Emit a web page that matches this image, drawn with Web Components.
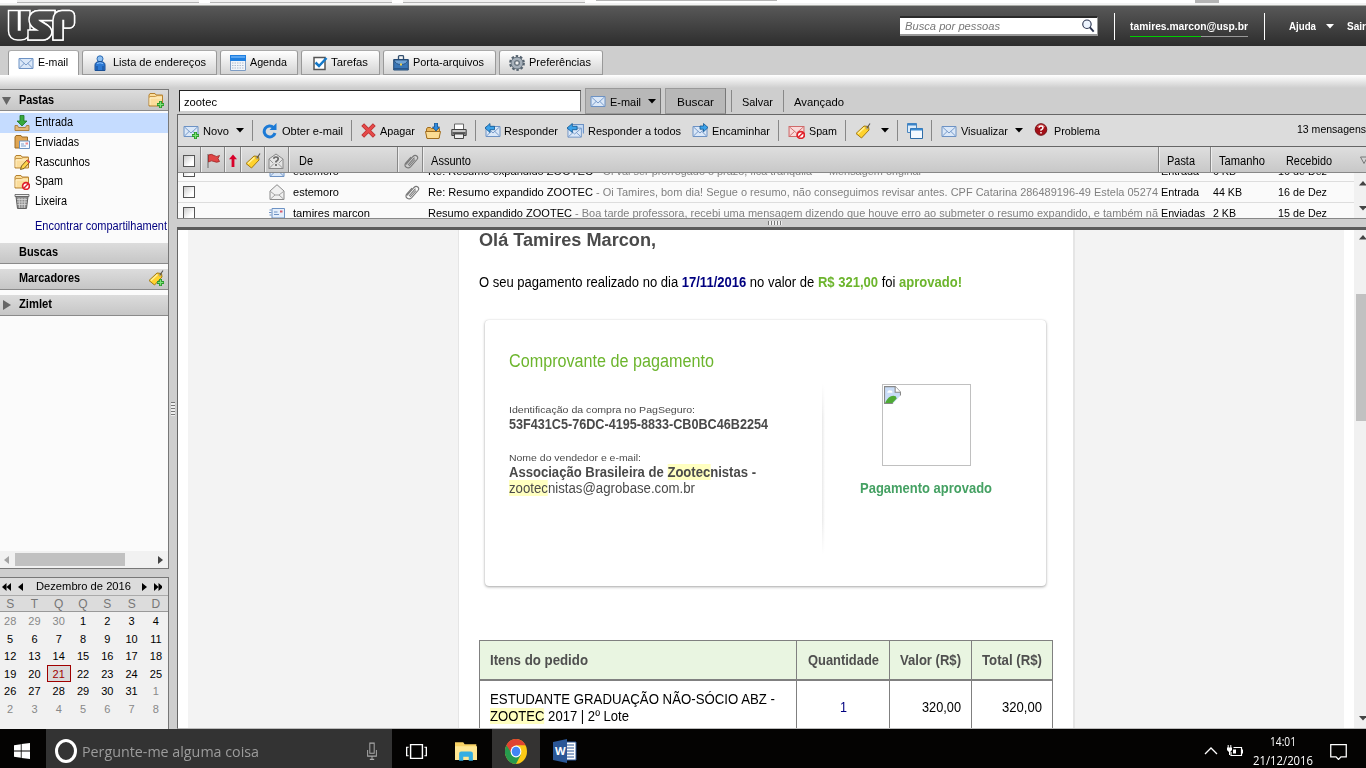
<!DOCTYPE html>
<html lang="pt-BR">
<head>
<meta charset="utf-8">
<title>Zimbra: Entrada</title>
<style>
  html, body {
    margin: 0;
    height: 768px;
    overflow: hidden;
    background: #cecece;
    font-family: "Liberation Sans", Arial, sans-serif;
    font-size: 11px;
    color: #000;
  }
  body {
    display: flex;
    flex-direction: column;
    width: 1366px;
  }
  .workspace {
    display: flex;
    height: 641px;
    overflow: hidden;
  }
  .main {
    display: flex;
    flex-direction: column;
    width: 1189px;
    height: 641px;
  }
</style>
</head>
<body>
  <browser-strip></browser-strip>
  <app-header></app-header>
  <app-tabs></app-tabs>
  <div class="workspace">
    <side-bar></side-bar>
    <split-sash vertical></split-sash>
    <div class="main">
      <search-bar></search-bar>
      <mail-toolbar></mail-toolbar>
      <message-list></message-list>
      <split-sash></split-sash>
      <message-view></message-view>
    </div>
  </div>
  <task-bar></task-bar>

<script>
const envelope = (fill = '#dbe8f8', line = '#6d92c4') => `
  <path d="M1 3.500h14v10H1z" fill="${fill}" stroke="${line}"/>
  <path d="M1.500 4l6.500 6 6.500-6M1.500 13l4.700-4.600M14.500 13L9.800 8.400" fill="none" stroke="${line}" stroke-width=".9"/>`;

const folder = `
  <path d="M1 14V3l1-1.500h5l1 1.500h6.500V14z" fill="#fbdd9b" stroke="#b5812e"/>
  <path d="M1.500 4.500h6l1.500-1h5.500" fill="none" stroke="#c99746"/>
  <path d="M2 13V6h12" fill="none" stroke="#fff0c8"/>`;

const plus = '<path d="M12.500 9v7M9 12.500h7" stroke="#2c9a2c" stroke-width="3"/><path d="M12.500 9.700v5.600M9.700 12.500h5.600" stroke="#7fe27a" stroke-width="1.200"/>';
const forbid = '<circle cx="12" cy="12" r="3.400" fill="#fff" stroke="#e0202a" stroke-width="1.700"/><path d="M9.800 14.200l4.400-4.400" stroke="#e0202a" stroke-width="1.500"/>';
const tag = '<path d="M1 10.500L9 3l4.500.500L14 7l-7.500 8z" fill="#ffd22e" stroke="#a27a14"/><path d="M3 10.500L9.500 4.500" stroke="#fff09a" stroke-width="1.500"/><circle cx="12" cy="5" r="1" fill="#fff" stroke="#7a6530" stroke-width=".6"/><path d="M12 5l3-4.500" stroke="#555" stroke-width="1.100"/>';
const leftArrow = '<path d="M0 5l5-4.500v2.800h4.500v3.400H5v2.800z" fill="#3ba2ea" stroke="#12568f" stroke-width=".8"/>';

const icons = {
  mail: envelope(),
  mailNew: envelope() + plus,
  mailSpam: envelope('#f9dada', '#cf6a6a') + forbid,
  reply: envelope() + leftArrow,
  replyAll: `<path d="M5 1.500h10.500v9" fill="#c3daf5" stroke="#6d92c4"/><g transform="translate(0 2) scale(.9)">${envelope()}</g>${leftArrow}`,
  forward: envelope() + '<path d="M16 4.500L11.500.500V3H8v3.200h3.500v2.600z" fill="#3ba2ea" stroke="#12568f" stroke-width=".8"/>',
  person: '<circle cx="8" cy="3.800" r="3" fill="#8fc0f0" stroke="#2b6bb5"/><path d="M3 15.500V10c0-2.500 2-3.500 5-3.500s5 1 5 3.500v5.500z" fill="#2c79d4" stroke="#1a4f95"/><path d="M5 15v-4M11 15v-4" stroke="#174a8e"/><path d="M5 8.500q3-1.500 6 0" stroke="#8fc4ff" fill="none"/>',
  calendar: '<path d="M.5.5h15v15H.5z" fill="#f1f4f9" stroke="#7d9cc4"/><path d="M0 0h16v6H0z" fill="#1f7fe0"/><path d="M1 1h14v2H1z" fill="#5aa6f2"/><path d="M2 8h12M2 10.500h12M2 13h12" stroke="#aebccd" stroke-dasharray="1.500 1"/>',
  task: '<path d="M2 2.500h11v12H2z" fill="#fff" stroke="#555" stroke-width="1.500"/><path d="M3.500 7.500l3.500 3.500L14.500 3" fill="none" stroke="#1478c8" stroke-width="2.500"/>',
  briefcase: '<path d="M5.500 4V1.500Q5.500.700 6.500.700h3q1 0 1 .8V4" fill="none" stroke="#34506e" stroke-width="1.300"/><path d="M.7 4.500h14.600v10.500H.7z" fill="#3a76b5" stroke="#234a75"/><path d="M1 5q1.500 4.500 7 4.500T15 5z" fill="#6fa3d6" stroke="#234a75" stroke-width=".8"/><path d="M7 8.500h2v2H7z" fill="#f0cf4a"/><path d="M1 13.500h14" stroke="#28568a"/>',
  gear: '<circle cx="8" cy="8" r="6.500" fill="none" stroke="#56636f" stroke-width="2.800" stroke-dasharray="2.400 1.684"/><circle cx="8" cy="8" r="4.300" fill="none" stroke="#5d6974" stroke-width="4"/><circle cx="8" cy="8" r="4.200" fill="none" stroke="#a6b0ba" stroke-width="2.800"/><circle cx="8" cy="8" r="2.200" fill="#f0f0f0" stroke="#56636f"/>',
  folderNew: folder + plus,
  inbox: '<path d="M1 10.500v5h14v-5h-2.500l-1 2h-7l-1-2z" fill="#e2b878" stroke="#a67837" stroke-width=".9"/><path d="M6 .5h4v5.500h3L8 11 3 6h3z" fill="#37a93c" stroke="#1d7523" stroke-width=".8"/>',
  sent: '<path d="M1 14V3l1-1.500h5l1 1.500h5.500V14z" fill="#e0a653" stroke="#9b6b25"/><path d="M5.500 7h10v7.500h-10z" fill="#f6faff" stroke="#6f93c0"/><path d="M11.500 8.500h2.500v2h-2.500z" fill="#f28b8b"/><path d="M7 10h3M7 12h5" stroke="#7f9fca"/>',
  draft: folder + '<path d="M6.500 15.500l1-3.500L13 6l2.500 2.500L10 14.500z" fill="#ffd34a" stroke="#5c430b" stroke-width=".8"/><path d="M13 6l2.500 2.500" stroke="#e04848" stroke-width="2"/>',
  spamFolder: folder + forbid,
  trash: '<path d="M2 3.500h12l-1.500 12h-9z" fill="#8f8f8f" stroke="#5e5e5e"/><path d="M1 1.500h14v2H1z" fill="#eee" stroke="#555" stroke-width=".8"/><path d="M5 5l.7 10M8 5v10M11 5l-.7 10M3 6.500h10M3 9h10M3.500 11.500h9" stroke="#d8d8d8" stroke-width=".8"/>',
  tag,
  tagNew: tag + plus,
  refresh: '<path d="M13 10a5.500 5.500 0 1 1-1.500-5.500" fill="none" stroke="#1c7ad6" stroke-width="3"/><path d="M14.500 0v7h-7z" fill="#1c7ad6"/>',
  del: '<path d="M1.800 1.800l12.400 12.400M14.200 1.800L1.800 14.200" stroke="#b83030" stroke-width="4.200"/><path d="M2.300 2.300l11.400 11.400M13.700 2.300L2.300 13.700" stroke="#e64a4a" stroke-width="2.800"/>',
  move: '<path d="M1.500 14.500V6l1-1.500h3l1 1h8v9z" fill="#e9b65c" stroke="#a06d1f"/><path d="M.5 8.500h15l-1.500 7H2z" fill="#fbdc93" stroke="#a06d1f"/><path d="M9.500 0h3v4h2L11 8 7.500 4h2z" fill="#2d8be0" stroke="#134f8b" stroke-width=".8"/>',
  print: '<path d="M3.500 1h9v6h-9z" fill="#fff" stroke="#666"/><path d="M.8 6.500h14.400v6H.8z" fill="#8b8b8b" stroke="#444"/><path d="M1.500 8h13" stroke="#ddd" stroke-width="1.500"/><path d="M3.500 11h9v4.500h-9z" fill="#eee" stroke="#444"/><path d="M2 10h12" stroke="#333"/>',
  windows: '<path d="M.5.500h9v9h-9z" fill="#dcecfb" stroke="#4a86be"/><path d="M.5 1.500h9" stroke="#3a83c6" stroke-width="2"/><path d="M3.500 5.500h12v10h-12z" fill="#f4f9ff" stroke="#2f6da8"/><path d="M4 6.500h11.500" stroke="#3a8bd2" stroke-width="2"/>',
  problem: '<circle cx="7" cy="7.500" r="5.800" fill="#a30f17" stroke="#741015"/><path d="M3 5q4-4 8 0" stroke="#e66" fill="none"/><path d="M5 5.800Q5 4 7 4t2 1.700Q9 7 7 8v.8M7 10v1.500" fill="none" stroke="#fff" stroke-width="1.500"/>',
  flag: '<path d="M3 1v14" stroke="#8a8a8a" stroke-width="1.500"/><path d="M3.500 2q3-1.500 5.500.500t5.500 0L13 5.500l1.500 3Q11.500 10 9 8.500T3.500 9z" fill="#e04545" stroke="#9c2222" stroke-width=".8"/>',
  up: '<path d="M8 1.500l4 4.700H9.400V14H6.600V6.200H4z" fill="#d8002a"/>',
  status: '<path d="M1 6l7-5 7 5v9.500H1z" fill="#e3e3e3" stroke="#888"/><path d="M1 15.500l5-5M15 15.500l-5-5M1 6l4 4M15 6l-4 4" stroke="#999"/><path d="M5.800 5.800Q5.800 4 8 4t2.200 2Q10.200 7.500 8 8.500v1M8 11v2" fill="none" stroke="#666" stroke-width="1.700"/>',
  read: '<path d="M1 7l7-6.300L15 7v8.500H1z" fill="#f0f0f0" stroke="#8a8a8a"/><path d="M1.500 7.500L6 11h4l4.500-3.500M1.500 15L6 11M14.500 15L10 11" fill="none" stroke="#999" stroke-width=".9"/>',
  sentMail: '<path d="M3 3.500h12.500v9.500H3z" fill="#e5effb" stroke="#6d92c4"/><path d="M11 5.500h2.500v2H11z" fill="#d85a6a"/><path d="M5 7h3.500M5 9.500h5M.5 5h2M0 7.500h2.500M.5 10h2" stroke="#6d92c4"/>',
  clip: '<path d="M3 11.500L10 3.500q2-2 3.800-.500t.2 3.500L7.500 13.800q-2 2-4.200.500t-.8-4L8 4M5 12l6.500-7.300M6 13l6-6.500" fill="none" stroke="#777" stroke-width="1.100"/>',
  search: '<circle cx="6.800" cy="6" r="4.800" fill="#eef5ff" stroke="#2c3550" stroke-width="1.300"/><path d="M10.200 9.500l4.300 5" stroke="#2c3550" stroke-width="2.200"/>',
  broken: '<path d="M.5.500h10l5 5v10H.5z" fill="#c8dcf7" stroke="#888"/><path d="M10.500.500v5h5" fill="#fff" stroke="#888"/><path d="M3 6q.5-3 3-2 2-.5 2 2z" fill="#fff"/><path d="M1 15q4-8 10-6l1 2-4 4z" fill="#4faa36"/><path d="M8 16l8-8v8z" fill="#fff"/>',
  windowsLogo: '<path d="M0 2.200L6.800 1.200v6.300H0zM7.600 1L16 0v7.500H7.600zM0 8.400h6.800v6.300L0 13.800zM7.600 8.400H16V16l-8.400-1.100z" fill="#fff"/>',
  mic: '<path d="M5.500 1h5v9h-5z" fill="none" stroke="#aaa" stroke-width="1.100"/><path d="M3 7v5.500h10V7M8 13v3M5.500 15.500h5" fill="none" stroke="#aaa" stroke-width="1.100"/>',
  taskView: '<path d="M3.500 1.500h9v13h-9z" fill="none" stroke="#fff" stroke-width="1.100"/><path d="M2 4H.5v8H2M14 4h1.500v8H14" fill="none" stroke="#fff"/>',
  explorer: '<path d="M0 14V1h6l1 1.500h8.500V14z" fill="#f8d264"/><path d="M0 4h16v10.500H0z" fill="#ffe793"/><path d="M3 15V9.500Q3 8 4.500 8h7Q13 8 13 9.500V15h-3v-3H6v3z" fill="#35aee2"/>',
  chrome: '<circle cx="8" cy="8" r="8" fill="#fbc916"/><path d="M8 8L1.070 4A8 8 0 0 0 8 16l3.460-6z" fill="#279a4d"/><path d="M1.070 4A8 8 0 0 1 14.930 4H8L5 9.500z" fill="#df4332"/><circle cx="8" cy="8" r="3.900" fill="#fff"/><circle cx="8" cy="8" r="3.100" fill="#4285f4"/>',
  chevron: '<path d="M2 11l6-6 6 6" fill="none" stroke="#fff" stroke-width="1.300"/>',
  battery: '<path d="M6.500 4.500H14.500v8H4V9" fill="none" stroke="#fff" stroke-width="1.200"/><path d="M15 6.500h1v4h-1zM6 6.500h3v4H6zM0 4.500h5v2.500L3.500 8.700h-2L0 7z" fill="#fff"/><path d="M1.200 2v3M3.800 2v3M2.500 8v4" stroke="#fff"/>',
  notify: '<path d="M.7 1.500h14.600v11.500h-5L8 15.500 5.700 13h-5z" fill="none" stroke="#fff" stroke-width="1.200"/>'
};

// single line of text, squeezed or stretched to the width in its "w" attribute
class FitText extends HTMLElement {
  constructor() {
    super();
    this.attachShadow({mode: 'open'}).innerHTML = `
      <style>
        :host { display: inline-block; white-space: nowrap; flex: none; }
        span { display: inline-block; transform-origin: 0 50%; }
      </style>
      <span><slot></slot></span>
    `;
  }

  connectedCallback() {
    const target = Number(this.getAttribute('w'));
    const span = this.shadowRoot.querySelector('span');
    const natural = span.getBoundingClientRect().width;

    this.style.width = `${target}px`;
    if(natural > 0) {
      span.style.transform = `scaleX(${target / natural})`;
    }
  }
}

class ZmIcon extends HTMLElement {
  connectedCallback() {
    const size = this.getAttribute('size') || 16;
    const height = this.getAttribute('height') || size;

    if(!this.shadowRoot) {
      this.attachShadow({mode: 'open'}).innerHTML = `
        <style>
          :host { display: block; flex: none; width: ${size}px; height: ${height}px; }
          svg { display: block; width: 100%; height: 100%; }
        </style>
        <svg viewBox="0 0 16 16" preserveAspectRatio="none">${icons[this.getAttribute('name')]}</svg>
      `;
    }
  }
}

class TriangleMark extends HTMLElement {
  connectedCallback() {
    const points = {
      down: '0,0 8,0 4,4.500',
      up: '0,4.500 8,4.500 4,0',
      left: '5,0 5,8 0,4',
      right: '0,0 0,8 5,4'
    };
    const dir = this.getAttribute('dir') || 'down';
    const side = dir === 'left' || dir === 'right';

    if(!this.shadowRoot) {
      this.attachShadow({mode: 'open'}).innerHTML = `
        <style>
          :host { display: block; flex: none; }
          svg { display: block; }
        </style>
        <svg width="${side ? 5 : 8}" height="${side ? 8 : 5}"><polygon points="${points[dir]}" fill="currentColor"/></svg>
      `;
    }
  }
}

class BrowserStrip extends HTMLElement {
  constructor() {
    super();
    this.attachShadow({mode: 'open'}).innerHTML = `
      <style>
        :host { display: block; height: 6px; background: #fff; }
        .tabs { display: flex; height: 3px; padding-left: 17px; gap: 11px; background: #fff; }
        i { width: 182px; height: 2px; background: #f0f0f0; border-bottom: 1px solid #b5b5b5; }
        i:nth-child(4) { height: 0; background: #fff; width: 181px; border: 0; border-top: 1px solid #b5b5b5; }
        b { width: 24px; height: 3px; margin-left: 407px; background: #b4b4b4; }
        .line { height: 2px; background: #f2f2f2; border-bottom: 1px solid #a9aba6; }
      </style>
      <div class="tabs"><i></i><i></i><i></i><i></i><b></b></div>
      <div class="line"></div>
    `;
  }
}

class AppHeader extends HTMLElement {
  constructor() {
    super();
    this.attachShadow({mode: 'open'}).innerHTML = `
      <style>
        :host {
          display: flex;
          align-items: center;
          height: 40px;
          box-sizing: border-box;
          padding-left: 7px;
          background: linear-gradient(#585858, #2d2d2d);
          color: #fff;
          font-weight: bold;
          overflow: hidden;
        }
        .logo { width: 70px; height: 33px; margin: -1px 823px 0 0; flex: none; }
        .logo g { fill: none; stroke-linecap: square; stroke-linejoin: round; }
        .people {
          display: flex;
          align-items: center;
          width: 198px;
          height: 20px;
          box-sizing: border-box;
          padding: 0 2px 0 5px;
          justify-content: space-between;
          border-top: 2px solid #292929;
          border-bottom: 2px solid #999;
          border-right: 1px solid #999;
          background: #fff;
          color: #777;
          font-weight: normal;
          font-style: italic;
          margin-right: 16px;
        }
        .bar { width: 1px; height: 27px; background: #fff; flex: none; }
        .user { margin: 2px 16px 0 15px; line-height: 19px; }
        .quota { height: 1px; background: linear-gradient(90deg, #0c0 71px, #999 71px); }
        .help { margin-left: 24px; }
      </style>
      <svg class="logo" viewBox="0 0 70 33">
        <defs>
          <linearGradient id="bar" gradientUnits="userSpaceOnUse" x1="0" y1="-3" x2="0" y2="36">
            <stop offset="0" stop-color="#585858"/><stop offset="1" stop-color="#2d2d2d"/>
          </linearGradient>
          <path id="u" d="M6.500 6.500V22q0 4 4 4h3.500q4 0 4-4V6.500"/>
          <path id="s" d="M43 6.500H32q-5 0-5 4 0 3 3 5l8 5q3 2 1 4-1 1.500-3 1.500H26"/>
          <path id="p" d="M51 26V11q0-4.500 4-4.500h7.500V14h-1"/>
        </defs>
        <g stroke="#fff" stroke-width="11.500"><use href="#u"/><use href="#s"/><use href="#p"/></g>
        <g stroke="url(#bar)" stroke-width="8.500"><use href="#u"/></g>
        <g stroke="#fff" stroke-width="11.500"><use href="#s"/></g>
        <g stroke="url(#bar)" stroke-width="8.500"><use href="#s"/></g>
        <g stroke="#fff" stroke-width="11.500"><use href="#p"/></g>
        <g stroke="url(#bar)" stroke-width="8.500"><use href="#p"/></g>
      </svg>
      <div class="people">
        <fit-text w="95">Busca por pessoas</fit-text>
        <zm-icon name="search" size="14"></zm-icon>
      </div>
      <div class="bar"></div>
      <div class="user">
        <fit-text w="118">tamires.marcon@usp.br</fit-text>
        <div class="quota"></div>
      </div>
      <div class="bar"></div>
      <fit-text class="help" w="27">Ajuda</fit-text>
      <triangle-mark style="margin: 0 13px 0 10px"></triangle-mark>
      <fit-text w="19">Sair</fit-text>
    `;
  }
}

class AppTabs extends HTMLElement {
  constructor() {
    super();
    // icon, label, label width, tab width, padding before the icon, gap to the label
    const tabs = [
      ['mail', 'E-mail', 30, 71, 9, 4],
      ['person', 'Lista de endereços', 93, 135, 9, 5],
      ['calendar', 'Agenda', 37, 78, 9, 4],
      ['task', 'Tarefas', 37, 79, 10, 3],
      ['briefcase', 'Porta-arquivos', 71, 113, 9, 4],
      ['gear', 'Preferências', 62, 104, 9, 4]
    ];

    this.attachShadow({mode: 'open'}).innerHTML = `
      <style>
        :host { display: block; }
        nav { display: flex; gap: 3px; height: 29px; box-sizing: border-box; padding: 4px 0 0 8px; background: #cecece; }
        div {
          display: flex;
          align-items: center;
          box-sizing: border-box;
          height: 25px;
          border: 1px solid #999;
          border-top-color: #aaa;
          border-radius: 3px 3px 0 0;
          background: linear-gradient(#fff, #d4d4d4);
        }
        div:first-child { border-bottom: 0; background: #fff; }
        fit-text { margin-top: -2px; }
        footer { height: 13px; background: linear-gradient(#fff, #cecece); }
      </style>
      <nav>
        ${tabs.map(([icon, label, w, width, pad, gap]) => `
          <div style="width: ${width}px; padding-left: ${pad}px; gap: ${gap}px">
            <zm-icon name="${icon}"></zm-icon><fit-text w="${w}">${label}</fit-text>
          </div>`).join('')}
      </nav>
      <footer></footer>
    `;
  }
}

class SideBar extends HTMLElement {
  constructor() {
    super();
    const folders = [
      ['inbox', 'Entrada', 38],
      ['sent', 'Enviadas', 44],
      ['draft', 'Rascunhos', 55],
      ['spamFolder', 'Spam', 28],
      ['trash', 'Lixeira', 32]
    ];

    this.attachShadow({mode: 'open'}).innerHTML = `
      <style>
        :host { display: flex; flex-direction: column; width: 169px; flex: none; font-size: 12px; gap: 8px; margin-top: 1px; }
        .tree {
          display: flex;
          flex-direction: column;
          height: 480px;
          box-sizing: border-box;
          border: 1px solid #777;
          border-left: 0;
          background: #fbfbfb;
        }
        header {
          display: flex;
          align-items: center;
          box-sizing: border-box;
          height: 21px;
          flex: none;
          border-bottom: 1px solid #8a8a8a;
          background: linear-gradient(#dcdcdc, #c6c6c6);
          font-weight: bold;
          padding-right: 4px;
        }
        header zm-icon { margin: -1px 0 0 auto; }
        header + header { margin-top: 5px; }
        .find + header fit-text, header + header fit-text { margin-top: -2px; }
        .mark { width: 19px; color: #666; padding-left: 2px; box-sizing: border-box; }
        .folder { display: flex; align-items: center; gap: 5px; height: 19.700px; padding-left: 14px; }
        .folder:nth-of-type(1) { background: #c5dcff; margin-top: 2px; height: 20px; }
        .folder fit-text { margin-top: -2px; }
        .folder zm-icon { margin-top: -1px; }
        .find { color: #000080; padding-left: 35px; margin: 6px 0 9px; height: 16px; line-height: 16px; }
        .scroll { display: flex; align-items: center; justify-content: space-between; height: 17px; margin-top: auto; padding: 0 5px 0 4px; background: #f1f1f1; color: #444; }
        .thumb { width: 110px; height: 13px; margin-right: 27px; background: #c1c1c1; }
      </style>
      <div class="tree">
        <header>
          <span class="mark"><svg width="9" height="9" style="display: block"><path d="M0 1h9L4.500 9z" fill="#666"/></svg></span>
          <fit-text w="35">Pastas</fit-text>
          <zm-icon name="folderNew"></zm-icon>
        </header>
        ${folders.map(([icon, label, w]) => `
          <div class="folder"><zm-icon name="${icon}"></zm-icon><fit-text w="${w}">${label}</fit-text></div>`).join('')}
        <section class="find"><fit-text w="132">Encontrar compartilhament</fit-text></section>
        <header><span class="mark"></span><fit-text w="39">Buscas</fit-text></header>
        <header><span class="mark"></span><fit-text w="61">Marcadores</fit-text><zm-icon name="tagNew"></zm-icon></header>
        <header>
          <span class="mark"><svg width="9" height="10" style="display: block"><path d="M1 0l8 5-8 5z" fill="#666"/></svg></span>
          <fit-text w="33">Zimlet</fit-text>
        </header>
        <footer class="scroll">
          <triangle-mark dir="left" style="color: #a3a3a3"></triangle-mark>
          <span class="thumb"></span>
          <triangle-mark dir="right"></triangle-mark>
        </footer>
      </div>
      <mini-calendar></mini-calendar>
    `;
  }
}

class MiniCalendar extends HTMLElement {
  constructor() {
    super();
    let days = '';
    for(let i = 0; i < 42; i++) {
      const day = new Date(2016, 10, 28 + i);
      const cls = day.getMonth() !== 11 ? 'out' : day.getDate() === 21 ? 'today' : '';
      days += `<span class="${cls}">${day.getDate()}</span>`;
    }

    this.attachShadow({mode: 'open'}).innerHTML = `
      <style>
        :host { display: block; height: 152px; box-sizing: border-box; border: 1px solid #777; border-left: 0; border-bottom: 0; background: #f1f1f1; font-size: 11px; }
        header { display: flex; align-items: center; height: 17px; padding: 0 6px 0 2px; border-bottom: 1px solid #aaa; background: #dcdcdc; }
        header fit-text { margin: -1px 12px 0 13px; }
        .grid { display: grid; grid-template-columns: repeat(7, 24.300px); text-align: center; width: 170px; margin-left: -2px; }
        .names { height: 15px; line-height: 16px; background: #dcdcdc; color: #777; border-bottom: 1px solid #999; font-size: 12px; }
        .days { grid-auto-rows: 17.600px; line-height: 18px; }
        .out { color: #888; }
        .today { box-sizing: border-box; border: 1px solid #a00000; background: #d9d9d9; color: #a00000; line-height: 16px; }
      </style>
      <header>
        <svg width="9" height="8"><path d="M4.500 0v8L0 4zM9 0v8L4.500 4z"/></svg>
        <triangle-mark dir="left" style="margin-left: 7px"></triangle-mark>
        <fit-text w="95">Dezembro de 2016</fit-text>
        <triangle-mark dir="right" style="margin-left: -1px"></triangle-mark>
        <svg width="9" height="8" style="margin-left: 7px"><path d="M0 0v8l4.500-4zM4.500 0v8L9 4z"/></svg>
      </header>
      <div class="grid names">${[...'STQQSSD'].map(d => `<span>${d}</span>`).join('')}</div>
      <div class="grid days">${days}</div>
    `;
  }
}

class SplitSash extends HTMLElement {
  constructor() {
    super();
    this.attachShadow({mode: 'open'}).innerHTML = `
      <style>
        :host { display: flex; align-items: center; justify-content: center; flex: none; height: 8px; background: #cecece; border-bottom: 3px solid #5c5c5c; }
        :host([vertical]) { width: 8px; height: 641px; border: 0; }
        i { width: 14px; height: 4px; background: repeating-linear-gradient(90deg, #777 0 1px, #eee 1px 3px); }
        :host(:not([vertical])) i { margin-left: 7px; }
        :host([vertical]) i { width: 4px; height: 14px; background: repeating-linear-gradient(#777 0 1px, #eee 1px 3px); }
      </style>
      <i></i>
    `;
  }
}

class SearchBar extends HTMLElement {
  constructor() {
    super();
    this.attachShadow({mode: 'open'}).innerHTML = `
      <style>
        :host { display: flex; align-items: center; height: 26px; padding-left: 2px; flex: none; }
        .field { width: 402px; height: 22px; box-sizing: border-box; border: 1px solid #777; border-top-color: #222; border-left-color: #222; border-bottom-color: #ccc; background: #fff; padding: 1px 0 0 4px; line-height: 20px; }
        .button { display: flex; align-items: center; justify-content: center; height: 26px; box-sizing: border-box; border: 1px solid #999; border-right-color: #777; background: #b8b8b8; margin-left: 4px; }
        fit-text { padding-top: 1px; }
        .field fit-text { padding: 0; }
        i { width: 1px; height: 22px; background: #888; }
      </style>
      <div class="field"><fit-text w="33">zootec</fit-text></div>
      <div class="button" style="width: 76px; gap: 4px">
        <zm-icon name="mail"></zm-icon><fit-text w="31">E-mail</fit-text><triangle-mark style="margin-left: 3px"></triangle-mark>
      </div>
      <div class="button" style="width: 61px"><fit-text w="37">Buscar</fit-text></div>
      <i style="margin: 0 10px 0 5px"></i>
      <fit-text w="31">Salvar</fit-text>
      <i style="margin: 0 10px 0 10px"></i>
      <fit-text w="50">Avançado</fit-text>
    `;
  }
}

class MailToolbar extends HTMLElement {
  constructor() {
    super();
    this.attachShadow({mode: 'open'}).innerHTML = `
      <style>
        :host { display: flex; align-items: center; height: 33px; box-sizing: border-box; border: 1px solid #666; border-right: 0; background: #dcdcdc; padding-left: 5px; flex: none; overflow: hidden; }
        .item { display: flex; align-items: center; gap: 4px; flex: none; margin-right: 9px; }
        .item fit-text { padding-top: 1px; }
        i { width: 1px; height: 21px; background: #888; margin-right: 9px; margin-left: -1px; flex: none; }
        .count { margin-left: 197px; margin-bottom: 3px; }
      </style>
      <div class="item"><zm-icon name="mailNew"></zm-icon><fit-text w="26">Novo</fit-text><triangle-mark style="margin-left: 3px"></triangle-mark></div><i></i>
      <div class="item"><zm-icon name="refresh"></zm-icon><fit-text w="61">Obter e-mail</fit-text></div><i></i>
      <div class="item" style="margin-right: 10px"><zm-icon name="del" size="15"></zm-icon><fit-text w="35">Apagar</fit-text></div>
      <div class="item" style="margin-right: 10px"><zm-icon name="move"></zm-icon></div>
      <div class="item"><zm-icon name="print"></zm-icon></div><i></i>
      <div class="item" style="gap: 3px"><zm-icon name="reply"></zm-icon><fit-text w="54">Responder</fit-text></div>
      <div class="item" style="margin-right: 11px"><zm-icon name="replyAll" size="17" height="16"></zm-icon><fit-text w="93">Responder a todos</fit-text></div>
      <div class="item"><zm-icon name="forward"></zm-icon><fit-text w="58">Encaminhar</fit-text></div><i></i>
      <div class="item"><zm-icon name="mailSpam" size="17" height="16"></zm-icon><fit-text w="28">Spam</fit-text></div><i></i>
      <div class="item" style="gap: 10px"><zm-icon name="tag"></zm-icon><triangle-mark></triangle-mark></div><i></i>
      <div class="item"><zm-icon name="windows"></zm-icon></div><i></i>
      <div class="item" style="margin-right: 11px"><zm-icon name="mail"></zm-icon><fit-text w="47">Visualizar</fit-text><triangle-mark style="margin-left: 3px"></triangle-mark></div>
      <div class="item" style="margin-right: 0"><zm-icon name="problem" style="margin-top: -2px"></zm-icon><fit-text w="46">Problema</fit-text></div>
      <fit-text class="count" w="69">13 mensagens</fit-text>
    `;
  }
}

class MessageList extends HTMLElement {
  constructor() {
    super();
    const rows = [
      {icon: 'reply', from: 'estemoro', fw: 46, subject: 'Re: Resumo expandido ZOOTEC', sw: 165, text: '- Oi vai ser prorrogado o prazo, fica tranquila --- Mensagem original', tw: 325, folder: 'Entrada', dw: 38, size: '6 KB', kw: 23, date: '16 de Dez'},
      {icon: 'read', from: 'estemoro', fw: 46, clip: true, subject: 'Re: Resumo expandido ZOOTEC', sw: 165, text: '- Oi Tamires, bom dia! Segue o resumo, não conseguimos revisar antes. CPF Catarina 286489196-49 Estela 05274', tw: 562, folder: 'Entrada', dw: 38, size: '44 KB', kw: 29, date: '16 de Dez'},
      {icon: 'sentMail', from: 'tamires marcon', fw: 77, subject: 'Resumo expandido ZOOTEC', sw: 144, text: '- Boa tarde professora, recebi uma mensagem dizendo que houve erro ao submeter o resumo expandido, e também nã', tw: 583, folder: 'Enviadas', dw: 44, size: '2 KB', kw: 23, date: '15 de Dez'}
    ];

    this.attachShadow({mode: 'open'}).innerHTML = `
      <style>
        :host { display: block; height: 72px; box-sizing: border-box; border-left: 1px solid #666; border-bottom: 1px solid #888; flex: none; overflow: hidden; }
        .cols { display: grid; grid-template-columns: 23px 24px 16px 24px 24px 109px 25px 736px 52px 65px 90px; align-items: center; }
        .head { height: 25px; border-bottom: 1px solid #888; background: linear-gradient(#dedede, #c8c8c8); font-size: 12px; }
        .head > * { display: flex; align-items: center; height: 25px; box-sizing: border-box; border-right: 1px solid #888; padding: 2px 0 0 4px; box-shadow: 1px 0 #eee; }
        .head > :nth-child(n+10) { border: 0; box-shadow: none; }
        .check { display: block; width: 12px; height: 12px; box-sizing: border-box; border: 1px solid #555; background: linear-gradient(135deg, #ccc, #fff 70%); margin-left: 5px; }
        .head .check { margin-left: 1px; }
        .view { display: flex; height: 45px; background: #fafafa; overflow: hidden; }
        .rows { margin-top: -12px; width: 1176px; flex: none; overflow: hidden; }
        .row { height: 20px; border-bottom: 1px solid #ddd; }
        .subject { display: flex; gap: 3px; padding-left: 5px; overflow: hidden; width: 731px; }
        .subject fit-text + fit-text { color: #808080; }
        .pad { padding-left: 2px; }
        .scroll { display: flex; flex-direction: column; justify-content: space-between; align-items: center; box-sizing: border-box; height: 45px; width: 17px; padding: 8px 0 7px; background: #f1f1f1; color: #444; flex: none; }
      </style>
      <div class="cols head">
        <span><b class="check"></b></span>
        <span><zm-icon name="flag"></zm-icon></span>
        <span style="padding-left: 0"><zm-icon name="up"></zm-icon></span>
        <span><zm-icon name="tag"></zm-icon></span>
        <span style="padding-left: 3px"><zm-icon name="status"></zm-icon></span>
        <span style="padding-left: 10px"><fit-text w="14">De</fit-text></span>
        <span style="padding-left: 5px"><zm-icon name="clip"></zm-icon></span>
        <span style="padding-left: 8px"><fit-text w="40">Assunto</fit-text></span>
        <span style="padding-left: 8px"><fit-text w="28">Pasta</fit-text></span>
        <span style="padding-left: 8px"><fit-text w="46">Tamanho</fit-text></span>
        <span style="padding-left: 10px"><fit-text w="46">Recebido</fit-text>
          <svg width="9" height="9" style="margin-left: 28px"><path d="M.5 1h7L4 7.500z" fill="none" stroke="#777"/></svg></span>
      </div>
      <div class="view">
        <div class="rows">
          ${rows.map(r => `
            <div class="cols row">
              <b class="check"></b><span></span><span></span><span></span>
              <zm-icon name="${r.icon}" style="margin-left: 4px"></zm-icon>
              <span style="padding-left: 4px"><fit-text w="${r.fw}">${r.from}</fit-text></span>
              <span style="padding-left: 6px">${r.clip ? '<zm-icon name="clip"></zm-icon>' : ''}</span>
              <span class="subject"><fit-text w="${r.sw}">${r.subject}</fit-text><fit-text w="${r.tw}">${r.text}</fit-text></span>
              <span class="pad"><fit-text w="${r.dw}">${r.folder}</fit-text></span>
              <span class="pad"><fit-text w="${r.kw}">${r.size}</fit-text></span>
              <span class="pad"><fit-text w="49">${r.date}</fit-text></span>
            </div>`).join('')}
        </div>
        <div class="scroll"><triangle-mark dir="up"></triangle-mark><triangle-mark></triangle-mark></div>
      </div>
    `;
  }
}

class PaymentCard extends HTMLElement {
  constructor() {
    super();
    this.attachShadow({mode: 'open'}).innerHTML = `
      <style>
        :host { display: flex; width: 561px; height: 266px; margin: 28px 0 0 6px; box-sizing: border-box; border-radius: 4px; box-shadow: 0 1px 3px rgba(0, 0, 0, .35), 0 0 1px rgba(0, 0, 0, .15); background: #fff; color: #4a4a4a; }
        .info { width: 337px; box-sizing: border-box; padding: 31px 0 0 24px; flex: none; }
        .info > div { white-space: nowrap; }
        h2 { margin: 0 0 32px; height: 20px; line-height: 20px; font-size: 18px; font-weight: normal; color: #6cb52d; }
        .small { font-size: 9.500px; line-height: 14px; height: 14px; }
        .big { font-size: 14px; line-height: 16px; height: 16px; }
        mark { background: #ffffc0; color: inherit; }
        .rule { width: 3px; height: 172px; margin-top: 63px; background: linear-gradient(90deg, #e9e9e9, #fff); -webkit-mask: linear-gradient(transparent, #000 20%, #000 80%, transparent); }
        .state { width: 202px; padding-top: 64px; display: flex; flex-direction: column; align-items: center; color: #45a163; font-weight: bold; }
        .image { width: 89px; height: 82px; box-sizing: border-box; border: 1px solid #c0c0c0; padding: 1px; margin-bottom: 14px; }
      </style>
      <div class="info">
        <h2><fit-text w="205">Comprovante de pagamento</fit-text></h2>
        <div class="small"><fit-text w="186">Identificação da compra no PagSeguro:</fit-text></div>
        <div class="big" style="margin-top: -1px"><b><fit-text w="259">53F431C5-76DC-4195-8833-CB0BC46B2254</fit-text></b></div>
        <div class="small" style="margin-top: 19px"><fit-text w="132">Nome do vendedor e e-mail:</fit-text></div>
        <div class="big" style="margin-top: -1px"><b><fit-text w="247">Associação Brasileira de <mark>Zootec</mark>nistas -</fit-text></b></div>
        <div class="big"><fit-text w="186"><mark>zootec</mark>nistas@agrobase.com.br</fit-text></div>
      </div>
      <div class="rule"></div>
      <div class="state">
        <div class="image"><zm-icon name="broken" size="17" height="18"></zm-icon></div>
        <fit-text w="132" style="font-size: 14px; line-height: 16px">Pagamento aprovado</fit-text>
      </div>
    `;
  }
}

class OrderTable extends HTMLElement {
  constructor() {
    super();
    this.attachShadow({mode: 'open'}).innerHTML = `
      <style>
        :host { display: block; width: 574px; margin-top: 54px; box-sizing: border-box; border: 1px solid #808080; font-size: 14px; line-height: 17px; }
        .row { display: grid; grid-template-columns: 317px 93px 82px 80px; }
        .row > div { display: flex; align-items: center; box-sizing: border-box; border-right: 1px solid #808080; padding: 0 10px; height: 53px; justify-content: flex-end; }
        .row > div:last-child { border-right: 0; }
        .row > div:first-child { flex-direction: column; justify-content: center; align-items: flex-start; }
        .row > div:nth-child(2) { justify-content: center; padding: 0; }
        .head { border-bottom: 2px solid #808080; background: #e9f5e1; color: #4f4f4f; font-weight: bold; }
        .head > div { height: 38px; }
        mark { background: #ffffc0; }
      </style>
      <div class="row head">
        <div><fit-text w="98">Itens do pedido</fit-text></div>
        <div><fit-text w="71">Quantidade</fit-text></div>
        <div><fit-text w="61">Valor (R$)</fit-text></div>
        <div><fit-text w="60">Total (R$)</fit-text></div>
      </div>
      <div class="row">
        <div><fit-text w="285">ESTUDANTE GRADUAÇÃO NÃO-SÓCIO ABZ -</fit-text><fit-text w="139"><mark>ZOOTEC</mark> 2017 | 2º Lote</fit-text></div>
        <div style="color: #000080"><fit-text w="7">1</fit-text></div>
        <div><fit-text w="39">320,00</fit-text></div>
        <div><fit-text w="40">320,00</fit-text></div>
      </div>
    `;
  }
}

class MessageView extends HTMLElement {
  constructor() {
    super();
    this.attachShadow({mode: 'open'}).innerHTML = `
      <style>
        :host { display: flex; height: 499px; box-sizing: border-box; border-left: 1px solid #666; border-bottom: 1px solid #bbb; background: #fff; overflow: hidden; }
        .page { width: 1156px; margin: 0 10px; background: #f3f3f3; flex: none; }
        .sheet { width: 617px; height: 499px; box-sizing: border-box; margin-left: 270px; padding-left: 20px; border: 1px solid #e5e5e5; border-width: 0 2px 0 1px; background: #fff; }
        h1 { margin: 0 0 22px; height: 20px; line-height: 20px; font-size: 18px; color: #4a4a4a; }
        p { margin: 0; height: 20px; line-height: 20px; font-size: 14px; }
        .date { color: #000080; }
        .ok { color: #6cb52d; }
        .scroll { display: flex; flex-direction: column; align-items: center; width: 17px; flex: none; background: #f1f1f1; color: #444; padding-top: 5px; }
        .thumb { width: 13px; height: 127px; margin: 54px 0 295px; background: #c1c1c1; }
      </style>
      <div class="page">
        <div class="sheet">
          <h1><fit-text w="177">Olá Tamires Marcon,</fit-text></h1>
          <p><fit-text w="483">O seu pagamento realizado no dia <b class="date">17/11/2016</b> no valor de <b class="ok">R$ 321,00</b> foi <b class="ok">aprovado!</b></fit-text></p>
          <payment-card></payment-card>
          <order-table></order-table>
        </div>
      </div>
      <div class="scroll"><triangle-mark dir="up"></triangle-mark><span class="thumb"></span><triangle-mark></triangle-mark></div>
    `;
  }
}

class TaskBar extends HTMLElement {
  constructor() {
    super();
    this.attachShadow({mode: 'open'}).innerHTML = `
      <style>
        :host { display: flex; align-items: center; height: 39px; background: #040302; color: #fff; font-family: "Open Sans", "Noto Sans", sans-serif; flex: none; }
        .start { width: 46px; display: flex; justify-content: center; padding-right: 2px; box-sizing: border-box; }
        .ask { display: flex; align-items: center; width: 346px; height: 39px; box-sizing: border-box; padding: 5px 13px 0 9px; background: #333; color: #9c9c9c; font-size: 15px; }
        .ask .ring { width: 22px; height: 24px; box-sizing: border-box; border: 3px solid #fff; border-radius: 50%; margin-right: 5px; }
        .ask zm-icon { margin-left: auto; }
        .app { display: flex; align-items: center; justify-content: center; width: 48px; height: 39px; padding-top: 5px; box-sizing: border-box; }
        .app.active { background: #343332; }
        .word { position: relative; width: 24px; height: 24px; }
        .word svg { display: block; }
        .word b { position: absolute; left: 2px; top: 5px; font: bold 11px/14px "Open Sans", sans-serif; }
        .clock { display: flex; flex-direction: column; align-items: center; font-size: 12px; line-height: 19px; width: 60px; margin: 5px 17px 0 10px; }
      </style>
      <div class="start"><zm-icon name="windowsLogo" style="margin-top: 5px"></zm-icon></div>
      <div class="ask">
        <span class="ring"></span><fit-text w="177">Pergunte-me alguma coisa</fit-text><zm-icon name="mic" size="14" height="18"></zm-icon>
      </div>
      <div class="app"><zm-icon name="taskView" size="21" height="17"></zm-icon></div>
      <div class="app" style="width: 52px"><zm-icon name="explorer" size="22" height="21"></zm-icon></div>
      <div class="app active"><zm-icon name="chrome" size="22" height="25"></zm-icon></div>
      <div class="app" style="width: 50px">
        <div class="word">
          <svg width="24" height="24"><path d="M12 3h11v18H12z" fill="#fff" stroke="#2b5797"/><path d="M14 6h7M14 9h7M14 12h7M14 15h7M14 18h7" stroke="#2b5797"/><path d="M0 3l14-3v24L0 21z" fill="#2b5797"/></svg>
          <b>W</b>
        </div>
      </div>
      <zm-icon name="chevron" style="margin: 4px 8px 0 auto"></zm-icon>
      <zm-icon name="battery" style="margin-top: 4px"></zm-icon>
      <div class="clock"><fit-text w="26">14:01</fit-text><fit-text w="60">21/12/2016</fit-text></div>
      <zm-icon name="notify" size="17" style="margin: 5px 19px 0 0"></zm-icon>
    `;
  }
}

customElements.define('fit-text', FitText);
customElements.define('zm-icon', ZmIcon);
customElements.define('triangle-mark', TriangleMark);
customElements.define('browser-strip', BrowserStrip);
customElements.define('app-header', AppHeader);
customElements.define('app-tabs', AppTabs);
customElements.define('mini-calendar', MiniCalendar);
customElements.define('side-bar', SideBar);
customElements.define('split-sash', SplitSash);
customElements.define('search-bar', SearchBar);
customElements.define('mail-toolbar', MailToolbar);
customElements.define('message-list', MessageList);
customElements.define('payment-card', PaymentCard);
customElements.define('order-table', OrderTable);
customElements.define('message-view', MessageView);
customElements.define('task-bar', TaskBar);
</script>
</body>
</html>
